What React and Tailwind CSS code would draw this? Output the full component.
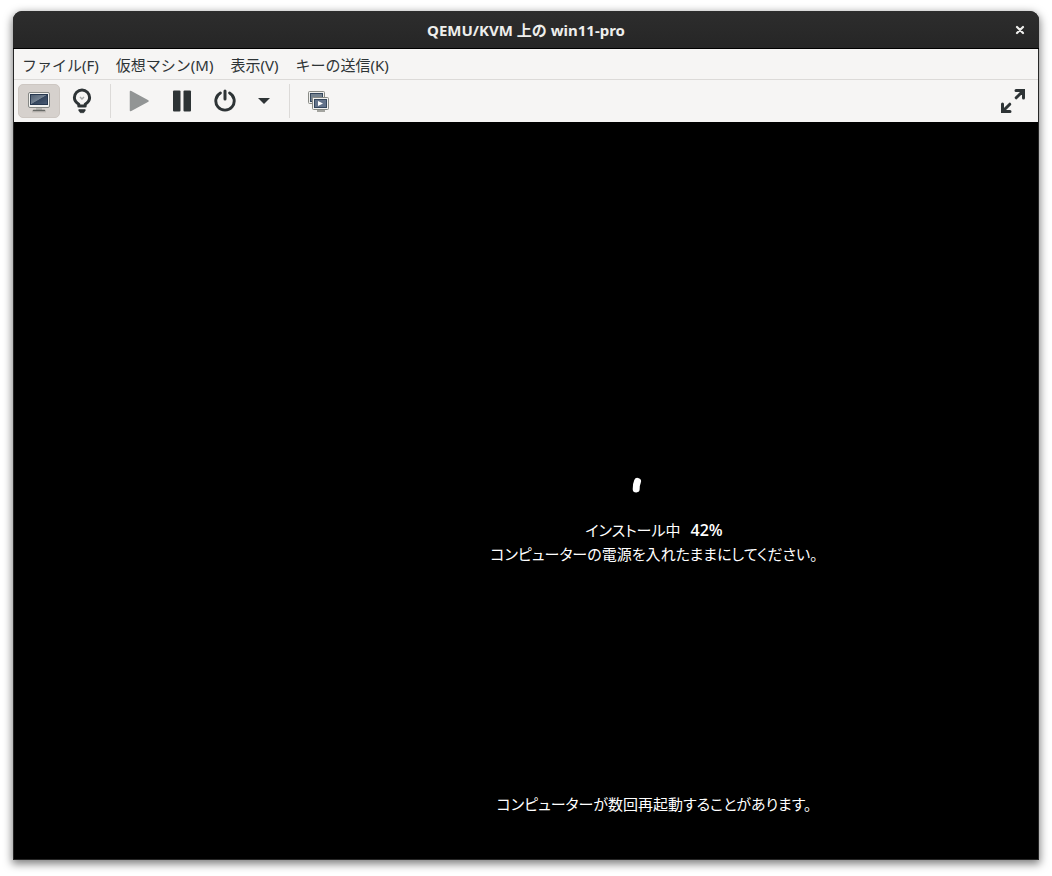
import React from "react";

const MENUS = ["ファイル(F)", "仮想マシン(M)", "表示(V)", "キーの送信(K)"];

function MonitorIcon() {
  return (
    <svg width="24" height="24" viewBox="0 0 24 24" aria-hidden="true">
      <defs>
        <linearGradient id="screen" x1="0" y1="0" x2="1" y2="1">
          <stop offset="0" stopColor="#4c5b6e" />
          <stop offset="0.48" stopColor="#748292" />
          <stop offset="0.52" stopColor="#34455c" />
          <stop offset="1" stopColor="#4b5d76" />
        </linearGradient>
      </defs>
      <rect x="1.5" y="3.5" width="21" height="15" rx="1.5" fill="#f2f2f0" stroke="#858784" />
      <rect x="3.5" y="5.5" width="17" height="10" fill="url(#screen)" stroke="#27384f" />
      <rect x="9" y="19" width="6" height="2" fill="#b5b5b1" />
      <path d="M6.5 21.5h11" stroke="#686a67" strokeWidth="1.6" strokeLinecap="round" />
      <path d="M5 22.8h14" stroke="#a7a5a1" strokeWidth="0.7" />
    </svg>
  );
}

function BulbIcon() {
  return (
    <svg width="24" height="26" viewBox="-1 0 24 26" aria-hidden="true">
      <path d="M8.8 18v-1.7C6.3 14.8 4.4 12.6 4.4 9.6a7.6 7.6 0 0 1 15.2 0c0 3-1.9 5.200-4.4 6.700V18z" fill="none" stroke="#2e3436" strokeWidth="3" strokeLinejoin="round" />
      <path d="M10 9l2 2 2-2" fill="none" stroke="#a2a5a5" strokeWidth="1.4" />
      <path d="M8.8 21.5h6.4v1.2l-1.500 2h-3.400l-1.500-2z" fill="#2e3436" stroke="#2e3436" strokeLinejoin="round" strokeWidth="0.6" />
    </svg>
  );
}

function PlayIcon() {
  return (
    <svg width="24" height="24" viewBox="1 0 24 24" aria-hidden="true">
      <path d="M3.5 2.500v19L21 12z" fill="#929595" stroke="#929595" strokeWidth="1.500" strokeLinejoin="round" />
    </svg>
  );
}

function PauseIcon() {
  return (
    <svg width="24" height="24" viewBox="0 0 24 24" aria-hidden="true">
      <rect x="3" y="1.500" width="7.500" height="21" rx="1" fill="#2e3436" />
      <rect x="13.500" y="1.500" width="7.500" height="21" rx="1" fill="#2e3436" />
    </svg>
  );
}

function PowerIcon() {
  return (
    <svg width="24" height="24" viewBox="-1 0 24 24" aria-hidden="true">
      <path d="M7.4 4a9.200 9.200 0 1 0 9.200 0" fill="none" stroke="#2e3436" strokeWidth="2.900" strokeLinecap="round" />
      <path d="M12 2v8" stroke="#2e3436" strokeWidth="3" strokeLinecap="round" />
    </svg>
  );
}

function SnapshotsIcon() {
  return (
    <svg width="24" height="24" viewBox="1 0 24 24" aria-hidden="true">
      <rect x="2.500" y="2.500" width="16" height="12" rx="1" fill="#eeeeec" stroke="#888a85" />
      <rect x="4.500" y="4.500" width="12" height="8" fill="#74828f" stroke="#34465c" />
      <rect x="6.500" y="8.500" width="16" height="12" rx="1" fill="#f2f2f0" stroke="#888a85" />
      <rect x="8.500" y="10.500" width="12" height="8" fill="#63738a" stroke="#34465c" />
      <path d="M12 12v5l5-2.500z" fill="#fff" />
      <path d="M11 22h8" stroke="#888a85" strokeWidth="1.500" />
    </svg>
  );
}

function ExpandIcon() {
  return (
    <svg width="26" height="26" viewBox="0 0 26 26" aria-hidden="true">
      <g fill="none" stroke="#2e3436" strokeWidth="3" strokeLinecap="round">
        <path d="M16 2.500H23.500V10M22.500 3.500l-6.300 6.300" />
        <path d="M2.500 16V23.500H10M3.500 22.500l6.300-6.300" />
      </g>
    </svg>
  );
}

function ToolButton({ label, active, children }) {
  return (
    <button
      type="button"
      aria-label={label}
      aria-pressed={active}
      className={
        active
          ? "flex h-[34px] w-[42px] items-center justify-center rounded-[5px] border border-[#cdc7c2] bg-[#d6d1cd]"
          : "flex h-[34px] w-[42px] items-center justify-center rounded-[5px]"
      }
    >
      {children}
    </button>
  );
}

function TitleBar() {
  return (
    <header className="grid h-[38px] shrink-0 grid-cols-[1fr_auto_1fr] items-center border-b border-black bg-linear-to-b from-[#2d2d2d] to-[#262626] px-[9px]">
      <h1 className="col-start-2 pt-0.5 text-[15px] font-bold text-[#eeeeec]">QEMU/KVM 上の win11-pro</h1>
      <button type="button" aria-label="閉じる" className="flex size-5 items-center justify-center justify-self-end">
        <svg width="10" height="10" viewBox="0 0 10 10" aria-hidden="true">
          <path d="M2 2l6 6M8 2L2 8" stroke="#eeeeec" strokeWidth="2.200" strokeLinecap="round" />
        </svg>
      </button>
    </header>
  );
}

function GuestDisplay() {
  return (
    <main className="flex-1 overflow-hidden bg-black">
      <div className="flex h-full w-[1280px] flex-col items-center justify-end pb-[43px] font-['Noto_Sans_CJK_JP',sans-serif] text-[15px] leading-6 text-white [font-feature-settings:'palt']">
        <svg width="48" height="48" viewBox="0 0 48 48" role="img" aria-label="処理中">
          <path d="M7.500 19.500Q6 23 6.200 27" fill="none" stroke="#fff" strokeWidth="7" strokeLinecap="round" />
        </svg>
        <p className="mt-2 flex items-baseline gap-2.5">
          <span>インストール中</span>
          <span className="font-['Open_Sans',sans-serif] text-base/6 font-semibold">42%</span>
        </p>
        <p>コンピューターの電源を入れたままにしてください。</p>
        <p className="mt-[226px]">コンピューターが数回再起動することがあります。</p>
      </div>
    </main>
  );
}

export default function App() {
  return (
    <div className="flex h-screen flex-col bg-white px-[13px] pt-[11px] pb-4 font-['Noto_Sans','Noto_Sans_CJK_JP',sans-serif]">
      <div className="flex min-h-0 flex-1 flex-col overflow-hidden rounded-t-[9px] bg-[#262626] shadow-[0_3px_9px_1px_rgba(0,0,0,0.5)]">
        <TitleBar />
        <div className="mx-px mb-px flex min-h-0 flex-1 flex-col">
          <nav className="flex h-[31px] shrink-0 items-center gap-px border-b border-[#dcdad8] bg-[#f6f5f4] pt-0.5">
            {MENUS.map((name) => (
              <button key={name} type="button" className="px-2 text-[15px] leading-6 text-[#2e3436]">
                {name}
              </button>
            ))}
          </nav>
          <div role="toolbar" aria-label="ツールバー" className="flex h-[42px] shrink-0 items-center bg-[#f6f5f4] px-1">
            <ToolButton label="コンソール" active>
              <MonitorIcon />
            </ToolButton>
            <ToolButton label="詳細">
              <BulbIcon />
            </ToolButton>
            <div className="mx-2 h-[34px] w-px bg-[#dcdad8]" />
            <ToolButton label="実行">
              <PlayIcon />
            </ToolButton>
            <ToolButton label="一時停止">
              <PauseIcon />
            </ToolButton>
            <ToolButton label="シャットダウン">
              <PowerIcon />
            </ToolButton>
            <button type="button" aria-label="電源メニュー" className="flex h-[34px] w-9 items-center justify-center">
              <svg width="14" height="6" viewBox="0 0 14 6" aria-hidden="true">
                <path d="M2 0h12L8 6z" fill="#2e3436" />
              </svg>
            </button>
            <div className="mx-2 h-[34px] w-px bg-[#dcdad8]" />
            <ToolButton label="スナップショット">
              <SnapshotsIcon />
            </ToolButton>
            <div className="flex-1" />
            <ToolButton label="全画面表示">
              <ExpandIcon />
            </ToolButton>
          </div>
          <GuestDisplay />
        </div>
      </div>
    </div>
  );
}
